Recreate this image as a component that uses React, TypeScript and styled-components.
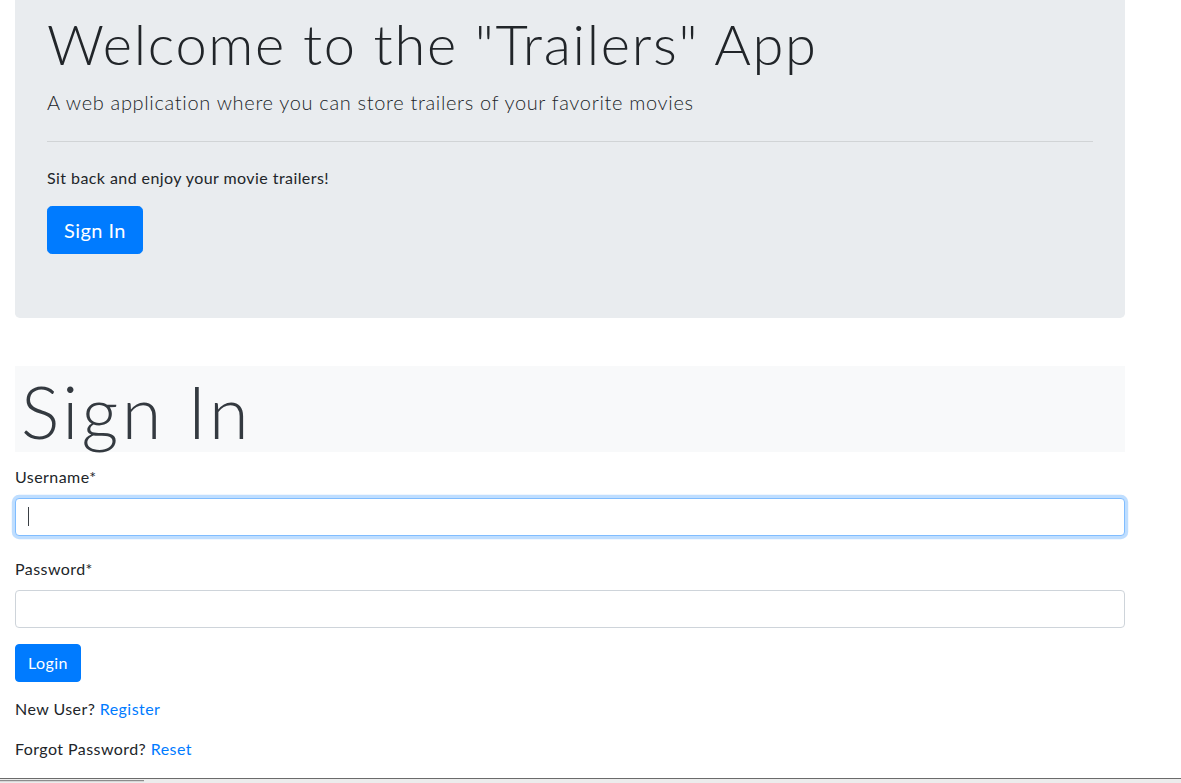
import React from "react";
import styled, { createGlobalStyle, css } from "styled-components";

const GlobalStyle = createGlobalStyle`
  html, body {
    margin: 0;
    padding: 0;
    background: #ffffff;
  }
  body {
    font-family: Lato, "Open Sans", sans-serif;
    font-size: 16px;
    line-height: 1.5;
    color: #212529;
    letter-spacing: 0.43px;
  }
  *, *::before, *::after { box-sizing: border-box; }
`;

const Container = styled.div`
  width: 1140px;
  padding: 0 15px;
`;

const Jumbotron = styled.section`
  background: #e9ecef;
  border-radius: 0 0 4.8px 4.8px;
  padding: 10px 32px 64px;
  display: flex;
  flex-direction: column;
  align-items: flex-start;
`;

const DisplayTitle = styled.h1`
  margin: 0 0 9.5px;
  font-size: 56px;
  font-weight: 300;
  line-height: 1.2;
  letter-spacing: 1.7px;
`;

const Lead = styled.p`
  margin: 0;
  font-size: 20px;
  font-weight: 300;
  line-height: 1.5;
  letter-spacing: 0.67px;
`;

const Divider = styled.hr`
  align-self: stretch;
  margin: 24px 0;
  height: 0;
  border: 0;
  border-top: 1px solid rgba(0, 0, 0, 0.1);
`;

const Text = styled.p`
  margin: 0 0 16px;
  font-size: 16px;
  line-height: 1.5;
`;

const Button = styled.button<{ $size?: "lg" | "md" }>`
  display: inline-block;
  background: #007bff;
  color: #ffffff;
  border: 1px solid #007bff;
  font-family: inherit;
  letter-spacing: inherit;
  font-weight: 400;
  line-height: 1.5;
  cursor: pointer;
  ${(p) =>
    p.$size === "lg"
      ? css`
          padding: 8px 16px;
          font-size: 20px;
          border-radius: 4.8px;
        `
      : css`
          padding: 6px 12px;
          font-size: 16px;
          border-radius: 4px;
        `}
`;

const SectionTitle = styled.h1`
  margin: 48px 0 13px;
  padding: 5px 6px 0;
  background: #f8f9fa;
  color: #343a40;
  font-size: 72px;
  font-weight: 300;
  line-height: 81px;
  letter-spacing: 3.3px;
`;

const Form = styled.form`
  display: flex;
  flex-direction: column;
  align-items: flex-start;
`;

const FormGroup = styled.div<{ $gap: number }>`
  align-self: stretch;
  margin-bottom: ${(p) => p.$gap}px;
`;

const Label = styled.label`
  display: block;
  margin-bottom: 9px;
  line-height: 1.5;
`;

const InputWrap = styled.div<{ $focused?: boolean }>`
  position: relative;
  ${(p) =>
    p.$focused &&
    css`
      &::after {
        content: "";
        position: absolute;
        left: 13px;
        top: 9px;
        width: 1px;
        height: 19px;
        background: #3a3f44;
      }
    `}
`;

const Input = styled.input<{ $focused?: boolean }>`
  display: block;
  width: 100%;
  height: 38px;
  padding: 6px 12px;
  font-family: inherit;
  font-size: 16px;
  color: #495057;
  background: #ffffff;
  border: 1px solid #ced4da;
  border-radius: 4px;
  outline: none;
  caret-color: transparent;
  ${(p) =>
    p.$focused &&
    css`
      border-color: #80bdff;
      box-shadow: 0 0 0 3.2px rgba(0, 123, 255, 0.25);
    `}
`;

const HelpLine = styled.p<{ $top?: number }>`
  margin: ${(p) => p.$top ?? 0}px 0 16px;
  line-height: 1.5;
`;

const Link = styled.a`
  color: #007bff;
  text-decoration: none;
`;

const ScrollTrack = styled.div`
  position: fixed;
  left: 0;
  right: 0;
  bottom: 0;
  height: 5px;
  background: #ececec;
  border-top: 1px solid #6b6b6b;
`;

const ScrollThumb = styled.div`
  width: 144px;
  height: 2px;
  margin-top: 1px;
  background: #8c8c8c;
  border-bottom: 1px solid #d6d6d6;
`;

export default function App() {
  return (
    <>
      <GlobalStyle />
      <Container>
        <Jumbotron>
          <DisplayTitle>Welcome to the "Trailers" App</DisplayTitle>
          <Lead>A web application where you can store trailers of your favorite movies</Lead>
          <Divider />
          <Text>Sit back and enjoy your movie trailers!</Text>
          <Button $size="lg">Sign In</Button>
        </Jumbotron>

        <SectionTitle>Sign In</SectionTitle>

        <Form onSubmit={(e) => e.preventDefault()}>
          <FormGroup $gap={21}>
            <Label htmlFor="username">Username*</Label>
            <InputWrap $focused>
              <Input id="username" type="text" $focused />
            </InputWrap>
          </FormGroup>
          <FormGroup $gap={16}>
            <Label htmlFor="password">Password*</Label>
            <InputWrap>
              <Input id="password" type="password" />
            </InputWrap>
          </FormGroup>
          <Button type="submit">Login</Button>
          <HelpLine $top={15}>
            New User? <Link href="#">Register</Link>
          </HelpLine>
          <HelpLine>
            Forgot Password? <Link href="#">Reset</Link>
          </HelpLine>
        </Form>
      </Container>
      <ScrollTrack>
        <ScrollThumb />
      </ScrollTrack>
    </>
  );
}
